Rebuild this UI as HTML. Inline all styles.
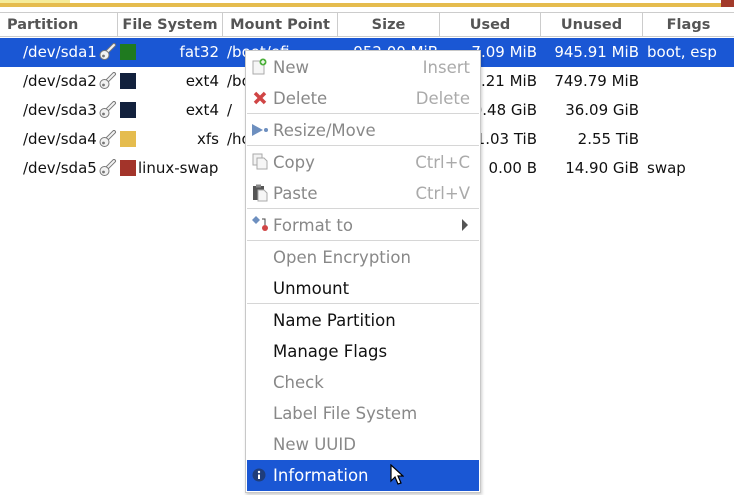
<!DOCTYPE html><html><head><style>
body{margin:0;width:734px;height:495px;background:#fff;position:relative;overflow:hidden;font-family:"DejaVu Sans","Liberation Sans",sans-serif;font-size:15px;color:#111}
.a{position:absolute;white-space:nowrap}
.h{top:12px;height:25px;border-top:1px solid #ccc;border-bottom:1px solid #ccc;border-right:1px solid #ccc;font-weight:bold;font-size:14.5px;color:#555;line-height:25px;box-sizing:border-box;text-align:center}
.r{left:0;width:734px;height:29px}
.t{line-height:29px}
.sw{width:16px;height:16px}
.mi{left:273px;line-height:31px;font-size:16.5px}
.dis{color:#888}
.sc{right:264px;color:#aaa;line-height:31px;font-size:16.5px}
.sep{left:247px;width:232px;height:1px;background:#d6d6d6}
</style></head><body>
<div class="a" style="left:0;top:0;width:70px;height:3px;background:#f5ec9a"></div>
<div class="a" style="left:0;top:3px;width:734px;height:4px;background:#e5bc4e"></div>
<div class="a" style="left:721px;top:0;width:13px;height:7px;background:#a23a2a"></div>
<div class="a h" style="left:0;width:118px;text-align:left;padding-left:7px">Partition</div>
<div class="a h" style="left:118px;width:105px">File System</div>
<div class="a h" style="left:223px;width:115px">Mount Point</div>
<div class="a h" style="left:338px;width:102px">Size</div>
<div class="a h" style="left:440px;width:101px">Used</div>
<div class="a h" style="left:541px;width:102px">Unused</div>
<div class="a h" style="left:643px;width:91px;border-right:none">Flags</div>
<div class="a r" style="top:38px;background:#1a57d4"></div>
<svg width="0" height="0" style="position:absolute"><defs><g id="k"><path d="M8 9L15 2" stroke="#777" stroke-width="4" stroke-linecap="round"/><path d="M8 9L15 2" stroke="#f2f2f2" stroke-width="2" stroke-linecap="round"/><circle cx="5.5" cy="12" r="4.5" fill="#f2f2f2" stroke="#777" stroke-width="1"/><circle cx="4.5" cy="13" r="1.4" fill="#777"/></g></defs></svg>
<div class="a t" style="left:23px;top:38px;color:#fff">/dev/sda1</div>
<div class="a t" style="left:23px;top:67px">/dev/sda2</div>
<div class="a t" style="left:23px;top:96px">/dev/sda3</div>
<div class="a t" style="left:23px;top:125px">/dev/sda4</div>
<div class="a t" style="left:23px;top:154px">/dev/sda5</div>
<svg class="a" style="left:99px;top:43px" width="18" height="18"><use href="#k"/></svg>
<svg class="a" style="left:99px;top:72px" width="18" height="18"><use href="#k"/></svg>
<svg class="a" style="left:99px;top:101px" width="18" height="18"><use href="#k"/></svg>
<svg class="a" style="left:99px;top:130px" width="18" height="18"><use href="#k"/></svg>
<svg class="a" style="left:99px;top:159px" width="18" height="18"><use href="#k"/></svg>
<div class="a sw" style="left:120px;top:44px;background:#1f7a1f"></div>
<div class="a sw" style="left:120px;top:73px;background:#12213d"></div>
<div class="a sw" style="left:120px;top:102px;background:#12213d"></div>
<div class="a sw" style="left:120px;top:131px;background:#e5bc4e"></div>
<div class="a sw" style="left:120px;top:160px;background:#a3342a"></div>
<div class="a t" style="right:515px;top:38px;color:#fff">fat32</div>
<div class="a t" style="right:515px;top:67px">ext4</div>
<div class="a t" style="right:515px;top:96px">ext4</div>
<div class="a t" style="right:515px;top:125px">xfs</div>
<div class="a t" style="left:138px;top:154px">linux-swap</div>
<div class="a t" style="left:227px;top:38px;color:#fff">/boot/efi</div>
<div class="a t" style="left:227px;top:67px">/boot</div>
<div class="a t" style="left:227px;top:96px">/</div>
<div class="a t" style="left:227px;top:125px">/home</div>
<div class="a t" style="right:296px;top:38px;color:#fff">952.00 MiB</div>
<div class="a t" style="right:197px;top:38px;color:#fff">7.09 MiB</div>
<div class="a t" style="right:197px;top:67px">4.21 MiB</div>
<div class="a t" style="right:197px;top:96px">10.48 GiB</div>
<div class="a t" style="right:197px;top:125px">1.03 TiB</div>
<div class="a t" style="right:197px;top:154px">0.00 B</div>
<div class="a t" style="right:95px;top:38px;color:#fff">945.91 MiB</div>
<div class="a t" style="right:95px;top:67px">749.79 MiB</div>
<div class="a t" style="right:95px;top:96px">36.09 GiB</div>
<div class="a t" style="right:95px;top:125px">2.55 TiB</div>
<div class="a t" style="right:95px;top:154px">14.90 GiB</div>
<div class="a t" style="left:647px;top:38px;color:#fff">boot, esp</div>
<div class="a t" style="left:647px;top:154px">swap</div>
<div class="a" style="left:245px;top:50px;width:234px;height:441px;background:#fff;border:1px solid #c8c8c8;box-shadow:1px 2px 3px rgba(0,0,0,.2)"></div>
<div class="a" style="left:247px;top:460px;width:232px;height:31px;background:#1a57d4"></div>
<div class="a mi dis" style="top:52px">New</div><div class="a sc" style="top:52px">Insert</div>
<div class="a mi dis" style="top:83px">Delete</div><div class="a sc" style="top:83px">Delete</div>
<div class="a sep" style="top:113px"></div>
<div class="a mi dis" style="top:115px">Resize/Move</div>
<div class="a sep" style="top:145px"></div>
<div class="a mi dis" style="top:147px">Copy</div><div class="a sc" style="top:147px">Ctrl+C</div>
<div class="a mi dis" style="top:178px">Paste</div><div class="a sc" style="top:178px">Ctrl+V</div>
<div class="a sep" style="top:208px"></div>
<div class="a mi dis" style="top:210px">Format to</div>
<div class="a" style="left:462px;top:219px;width:0;height:0;border-left:6px solid #555;border-top:6px solid transparent;border-bottom:6px solid transparent"></div>
<div class="a sep" style="top:240px"></div>
<div class="a mi dis" style="top:242px">Open Encryption</div>
<div class="a mi" style="top:273px">Unmount</div>
<div class="a sep" style="top:303px"></div>
<div class="a mi" style="top:305px">Name Partition</div>
<div class="a mi" style="top:336px">Manage Flags</div>
<div class="a mi dis" style="top:367px">Check</div>
<div class="a mi dis" style="top:398px">Label File System</div>
<div class="a mi dis" style="top:429px">New UUID</div>
<div class="a mi" style="top:460px;color:#fff">Information</div>
<svg class="a" style="left:252px;top:58px" width="16" height="18"><path d="M1 3h8l3 3v10H1z" fill="#f6f6f6" stroke="#aaa"/><circle cx="11" cy="4" r="3.5" fill="#4caf3a"/><path d="M11 2v4M9 4h4" stroke="#fff" stroke-width="1.3"/></svg>
<svg class="a" style="left:253px;top:91px" width="14" height="14"><path d="M2 2l10 10M12 2L2 12" stroke="#d04545" stroke-width="3.5"/></svg>
<svg class="a" style="left:251px;top:123px" width="18" height="14"><path d="M1 1l11 6-11 6z" fill="#6d8fbf"/><circle cx="15" cy="7" r="2" fill="#6d8fbf"/></svg>
<svg class="a" style="left:252px;top:153px" width="16" height="18"><rect x="1" y="1" width="9" height="11" fill="#f3f3f3" stroke="#aaa"/><path d="M5 5h7l3 3v8H5z" fill="#f6f6f6" stroke="#aaa"/></svg>
<svg class="a" style="left:252px;top:184px" width="16" height="18"><rect x="1" y="2" width="11" height="14" fill="#555"/><rect x="4" y="0.5" width="5" height="3" fill="#888"/><path d="M6 6h6l3 3v8H6z" fill="#f6f6f6" stroke="#aaa"/></svg>
<svg class="a" style="left:251px;top:215px" width="18" height="18"><path d="M5 1l4 4-4 4-4-4z" fill="#6d8fbf"/><path d="M11 4h3v6" stroke="#444" fill="none"/><circle cx="14" cy="13" r="3" fill="#d04545"/></svg>
<svg class="a" style="left:252px;top:468px" width="14" height="14"><circle cx="7" cy="7" r="6.5" fill="#1f3d7a"/><circle cx="7" cy="4" r="1.2" fill="#fff"/><path d="M7 6.5v4.5" stroke="#fff" stroke-width="2"/></svg>
<svg class="a" style="left:390px;top:464px" width="14" height="22"><path d="M1 1v16l4-4 3 7 3-1-3-7h5z" fill="#fff" stroke="#000" stroke-width="1.2"/></svg>
</body></html>
